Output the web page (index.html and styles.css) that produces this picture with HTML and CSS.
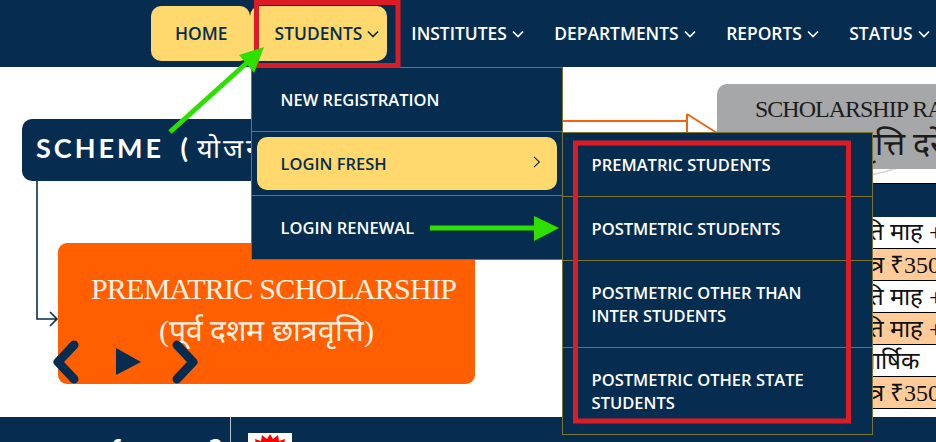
FILE: index.html
```html
<!DOCTYPE html>
<html lang="en">
<head>
    <meta charset="UTF-8">
    <meta name="viewport" content="width=device-width, initial-scale=1.0">
    <title>Scholarship Portal - Students</title>
    <link rel="stylesheet" href="styles.css">
</head>
<body>
<div class="page">

    <!-- Top navigation with the open Students menu -->
    <header class="topbar">
        <nav class="nav">
            <a class="nav-link nav-home active" href="#">HOME</a>
            <div class="nav-item">
                <a class="nav-link active" href="#">STUDENTS <svg class="chev" viewBox="0 0 12 8"><path d="M1 1.5l5 5 5-5"/></svg></a>
                <div class="menu">
                    <a class="menu-link" href="#">NEW REGISTRATION</a>
                    <div class="menu-row">
                        <a class="menu-link current" href="#">LOGIN FRESH <svg class="chev-right" viewBox="0 0 8 12"><path d="M1 .8l5.4 5.2L1 11.2"/></svg></a>
                        <div class="submenu">
                            <a class="menu-link" href="#">PREMATRIC STUDENTS</a>
                            <a class="menu-link" href="#">POSTMETRIC STUDENTS</a>
                            <a class="menu-link" href="#">POSTMETRIC OTHER THAN INTER STUDENTS</a>
                            <a class="menu-link" href="#">POSTMETRIC OTHER STATE STUDENTS</a>
                        </div>
                    </div>
                    <a class="menu-link" href="#">LOGIN RENEWAL</a>
                </div>
            </div>
            <a class="nav-link" href="#">INSTITUTES <svg class="chev" viewBox="0 0 12 8"><path d="M1 1.5l5 5 5-5"/></svg></a>
            <a class="nav-link" href="#">DEPARTMENTS <svg class="chev" viewBox="0 0 12 8"><path d="M1 1.5l5 5 5-5"/></svg></a>
            <a class="nav-link" href="#">REPORTS <svg class="chev" viewBox="0 0 12 8"><path d="M1 1.5l5 5 5-5"/></svg></a>
            <a class="nav-link" href="#">STATUS <svg class="chev" viewBox="0 0 12 8"><path d="M1 1.5l5 5 5-5"/></svg></a>
        </nav>
    </header>

    <!-- Scheme diagram: nodes sit on a free canvas, joined by lines -->
    <main class="canvas">
        <svg class="links" viewBox="0 0 936 350">
            <path class="link-navy" d="M37 114V252H57M50 245l7 7-7 7"/>
            <path class="link-orange" d="M496 54H687M687 47V70M687 47L717 66"/>
            <path class="scribble" d="M812 117c30-4 60-8 84-15M826 114c24-2 50-6 66-12"/>
        </svg>

        <div class="scheme-title">SCHEME (&#8201;<span class="title-hindi">योजना</span>)</div>

        <div class="scheme-card">
            <p>PREMATRIC SCHOLARSHIP</p>
            <p class="card-hindi">(पूर्व दशम छात्रवृत्ति)</p>
            <div class="slide-controls">
                <svg class="slide-prev" viewBox="0 0 28 44"><path d="M22 5L6 22l16 17"/></svg>
                <svg class="slide-play" viewBox="0 0 26 28"><path d="M0 0l25 14L0 27z"/></svg>
                <svg class="slide-next" viewBox="0 0 28 44"><path d="M6 5l16 17L6 39"/></svg>
            </div>
        </div>

        <div class="rates-title">
            <p>SCHOLARSHIP RATES</p>
            <p>(छात्रवृत्ति दरें)</p>
        </div>

        <table class="rates">
            <thead><tr><th>&nbsp;</th></tr></thead>
            <tbody>
                <tr><td>प्रति माह + ₹</td></tr>
                <tr class="tint"><td class="fee">मात्र ₹350</td></tr>
                <tr><td>प्रति माह + ₹</td></tr>
                <tr class="tint"><td>प्रति माह + ₹</td></tr>
                <tr><td class="yearly">वार्षिक</td></tr>
                <tr class="tint"><td class="fee">मात्र ₹350</td></tr>
            </tbody>
        </table>
    </main>

    <footer class="footer">
        <div class="footer-ask">news for you ?</div>
        <div class="footer-news">
            <svg class="new-badge" viewBox="0 0 44 30">
                <rect width="44" height="30" fill="#fff"/>
                <path fill="#f00" d="M22 1l3 5 5-4 1 6 6-2-1 6 6 1-4 5 4 4H2l4-4-4-5 6-1-1-6 6 2 1-6 5 4z"/>
            </svg>
        </div>
    </footer>

    <!-- Red boxes and green arrows drawn on top of the screenshot -->
    <svg class="marks" viewBox="0 0 936 442">
        <rect class="mark-box" x="256.5" y="2.5" width="141.5" height="63"/>
        <rect class="mark-box" x="575.5" y="143" width="273" height="278"/>
        <path class="mark-line" d="M170 132L250 60"/>
        <path class="mark-head" d="M264 47L239 55L254 73z"/>
        <path class="mark-line" d="M430 228H536"/>
        <path class="mark-head" d="M559 228L534 216V241z"/>
    </svg>
</div>
</body>
</html>
```

FILE: styles.css
```css
* {
    box-sizing: border-box;
}

body {
    margin: 0;
    background: #fff;
    font-family: "Open Sans", "Noto Sans", sans-serif;
}

.page {
    position: relative;
    width: 936px;
    height: 442px;
    overflow: hidden;
    display: flex;
    flex-direction: column;
}

/* Top bar */
.topbar {
    height: 67px;
    flex: none;
    background: #062d50;
    position: relative;
    z-index: 5;
}

.nav {
    display: flex;
    padding: 6px 0 0 151px;
}

.nav-item {
    position: relative;
}

.nav-link {
    display: flex;
    align-items: center;
    height: 55px;
    padding: 0 6.5px 2px 24px;
    border-radius: 10px;
    color: #fff;
    font-size: 17.4px;
    font-weight: 600;
    text-decoration: none;
    white-space: nowrap;
}

.nav-link.active {
    background: #ffd96e;
    color: #062d50;
}

.nav-item .nav-link {
    padding: 0 8px 2px 25px;
}

.nav-home {
    width: 100px;
    padding-right: 0;
}

.chev {
    width: 12px;
    height: 8px;
    margin-left: 5px;
    margin-top: 2px;
    fill: none;
    stroke: currentColor;
    stroke-width: 1.6;
}

/* Dropdown menus */
.menu,
.submenu {
    position: absolute;
    background: #062d50;
    border: 1px solid #7d7433;
}

.menu {
    top: 61px;
    left: 1px;
    width: 312px;
}

.menu-row {
    position: relative;
    border-top: 1px solid #7d7433;
    border-bottom: 1px solid #7d7433;
    padding: 5px;
    height: 65px;
}

.submenu {
    top: 0;
    left: 310px;
    width: 311px;
}

.menu-link {
    display: flex;
    align-items: center;
    justify-content: space-between;
    min-height: 63px;
    padding: 20px 29px;
    color: #fff;
    font-size: 16.5px;
    font-weight: 600;
    line-height: 23px;
    text-decoration: none;
}

.submenu .menu-link + .menu-link {
    border-top: 1px solid #7d7433;
}

.menu-link.current {
    min-height: 53px;
    height: 53px;
    padding: 0 16px 0 24px;
    background: #ffd96e;
    border-radius: 10px;
    color: #062d50;
}

.chev-right {
    width: 8px;
    height: 12px;
    margin-top: -4px;
    fill: none;
    stroke: #062d50;
    stroke-width: 1.1;
}

/* Diagram */
.canvas {
    position: relative;
    height: 350px;
    flex: none;
}

.links {
    position: absolute;
    left: 0;
    top: 0;
    width: 936px;
    height: 350px;
    fill: none;
}

.link-navy {
    stroke: #062d50;
    stroke-width: 1.6;
}

.link-orange {
    stroke: #f0640f;
    stroke-width: 2;
}

.scribble {
    stroke: #d4d4d4;
    stroke-width: 1;
}

.scheme-title {
    position: absolute;
    left: 22px;
    top: 52px;
    width: 300px;
    height: 62px;
    padding: 10px 14px;
    background: #062d50;
    border-radius: 10px;
    color: #fff;
    font-family: Lato, sans-serif;
    font-size: 27px;
    font-weight: 700;
    letter-spacing: 3px;
    word-spacing: 7px;
    white-space: nowrap;
}

.title-hindi {
    font-weight: 400;
}

.scheme-card {
    position: absolute;
    left: 58px;
    top: 176px;
    width: 417px;
    height: 141px;
    padding-top: 25px;
    background: #ff5f00;
    border-radius: 9px;
    color: #fff3e6;
    font-family: "Liberation Serif", serif;
    font-size: 30px;
    letter-spacing: -.75px;
    line-height: 42px;
    text-align: center;
}

.scheme-card p,
.rates-title p {
    margin: 0;
    white-space: nowrap;
}

.scheme-card p:first-child {
    padding-left: 14px;
}

.card-hindi {
    letter-spacing: 0;
    font-size: 30px;
}

.slide-controls svg {
    position: absolute;
    overflow: visible;
}

.slide-prev,
.slide-next {
    top: 97px;
    width: 28px;
    height: 44px;
    fill: none;
    stroke: #062d50;
    stroke-width: 9;
    stroke-linecap: round;
    stroke-linejoin: round;
}

.slide-prev {
    left: -6px;
}

.slide-next {
    left: 113px;
}

.slide-play {
    left: 58px;
    top: 105px;
    width: 26px;
    height: 28px;
    fill: #062d50;
}

.rates-title {
    position: absolute;
    left: 717px;
    top: 17px;
    width: 300px;
    height: 85px;
    padding: 7px 0 0 38px;
    background: #a5a7a8;
    border-radius: 10px;
    color: #1c1c1c;
    font-family: "Liberation Serif", serif;
    font-size: 24px;
    letter-spacing: -1px;
    line-height: 36px;
}

.rates-title p + p {
    font-size: 32px;
    letter-spacing: 0;
    line-height: 34px;
    padding-left: 43px;
}

.rates {
    position: absolute;
    left: 842px;
    top: 116px;
    width: 300px;
    border-collapse: collapse;
    font-family: "Liberation Serif", serif;
    font-size: 24px;
    color: #111;
}

.rates th {
    height: 33px;
    background: #062d50;
    border-top: 1px solid #000;
}

.rates td {
    height: 32px;
    padding: 0 0 0 8px;
    border-bottom: 1px solid #000;
    line-height: 28px;
    white-space: nowrap;
}

.rates .fee {
    padding-left: 9px;
}

.rates .yearly {
    padding-left: 20px;
}

.rates .tint td {
    background: #ffcc99;
}

/* Footer */
.footer {
    flex: 1;
    display: flex;
    background: #062d50;
    position: relative;
    z-index: 1;
}

.footer-ask {
    width: 231px;
    padding: 14px 8px 0 0;
    border-right: 1px solid #b9c3cc;
    color: #fff;
    font-family: Lato, sans-serif;
    font-size: 29px;
    font-weight: 700;
    text-align: right;
    white-space: nowrap;
}

.footer-news {
    padding: 16px 0 0 17px;
}

.new-badge {
    display: block;
    width: 44px;
    height: 30px;
}

/* Annotations */
.marks {
    position: absolute;
    left: 0;
    top: 0;
    width: 936px;
    height: 442px;
    z-index: 10;
    pointer-events: none;
}

.mark-box {
    fill: none;
    stroke: #dc1c24;
    stroke-width: 5;
}

.mark-line {
    fill: none;
    stroke: #2ee000;
    stroke-width: 5;
}

.mark-head {
    fill: #2ee000;
}
```
